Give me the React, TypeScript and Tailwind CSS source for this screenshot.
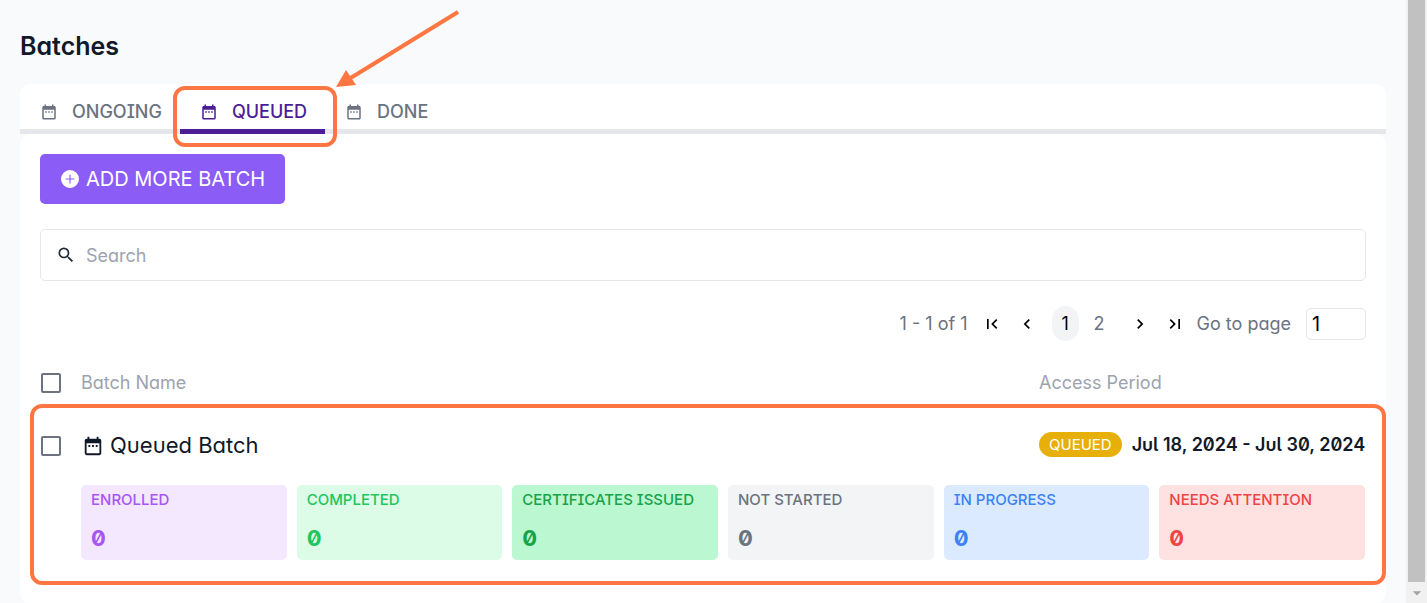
import {
  MdDateRange,
  MdSearch,
  MdFirstPage,
  MdLastPage,
  MdNavigateBefore,
  MdNavigateNext,
  MdArrowDropDown,
} from "react-icons/md";
import { BsPlusCircleFill } from "react-icons/bs";

const tabs = [
  { label: "ONGOING", active: false },
  { label: "QUEUED", active: true },
  { label: "DONE", active: false },
];

const stats = [
  { label: "ENROLLED", value: 0, style: "bg-[#f3e8ff] text-[#a855f7]" },
  { label: "COMPLETED", value: 0, style: "bg-[#dcfce7] text-[#22c55e]" },
  { label: "CERTIFICATES ISSUED", value: 0, style: "bg-[#bbf7d0] text-[#16a34a]" },
  { label: "NOT STARTED", value: 0, style: "bg-[#f3f4f6] text-[#6b7280]" },
  { label: "IN PROGRESS", value: 0, style: "bg-[#dbeafe] text-[#3b82f6]" },
  { label: "NEEDS ATTENTION", value: 0, style: "bg-[#fee2e2] text-[#ef4444]" },
];

function Checkbox({ label }: { label: string }) {
  return (
    <input
      type="checkbox"
      aria-label={label}
      className="block size-5 appearance-none rounded-[2px] border-2 border-[#6b7280] bg-white checked:bg-[#6b7280]"
    />
  );
}

function Tabs() {
  return (
    <div role="tablist" className="flex h-[50px] rounded-t-[10px] border-b-[5px] border-[#e5e7eb] bg-white">
      {tabs.map((tab) => (
        <div key={tab.label} className="relative">
          <button
            type="button"
            role="tab"
            aria-selected={tab.active}
            className={
              tab.active
                ? "flex h-[50px] items-center gap-[14px] border-b-[5px] border-[#4c1d95] pl-5 pr-[18px] pt-[10px] text-[18px] font-medium text-[#4c1d95]"
                : "flex h-[50px] items-center gap-[14px] border-b-[5px] border-transparent pl-5 pr-[18px] pt-[10px] text-[18px] font-medium text-[#6b7280]"
            }
          >
            <MdDateRange className="size-[18px]" />
            {tab.label}
          </button>
          {tab.active && (
            <div className="pointer-events-none absolute -left-[7px] -right-3 top-[2px] h-[61px] rounded-[12px] border-4 border-[#ff7643]" />
          )}
        </div>
      ))}
    </div>
  );
}

function Pagination() {
  return (
    <nav aria-label="Pagination" className="flex items-center justify-end text-[18px] text-[#6b7280]">
      <span className="mr-[14px]">1 - 1 of 1</span>
      <button type="button" aria-label="First page" className="mr-[15px] text-black">
        <MdFirstPage className="size-5 stroke-current" />
      </button>
      <button type="button" aria-label="Previous page" className="mr-[15px] text-black">
        <MdNavigateBefore className="size-5 stroke-current" />
      </button>
      <button type="button" className="h-[35px] w-[27px] rounded-full bg-[#f3f4f6] text-black">
        1
      </button>
      <button type="button" className="mx-[7px] h-[35px] w-[27px]">
        2
      </button>
      <button type="button" aria-label="Next page" className="ml-[10px] mr-[15px] text-black">
        <MdNavigateNext className="size-5 stroke-current" />
      </button>
      <button type="button" aria-label="Last page" className="mr-3 text-black">
        <MdLastPage className="size-5 stroke-current" />
      </button>
      <label htmlFor="page" className="mr-[15px]">
        Go to page
      </label>
      <input
        id="page"
        defaultValue="1"
        className="h-8 w-[60px] rounded-[5px] border border-[#e5e7eb] px-[5px] text-[20px] text-black outline-none"
      />
    </nav>
  );
}

function BatchTable() {
  return (
    <div className="relative mt-[19px]">
      <table className="w-full table-fixed border-collapse text-left">
        <colgroup>
          <col className="w-[41px]" />
          <col />
          <col className="w-[327px]" />
        </colgroup>
        <thead>
          <tr className="h-[44px] text-[18px] text-[#9ca3af]">
            <th className="p-0 pl-px pt-[2px]">
              <Checkbox label="Select all batches" />
            </th>
            <th className="p-0 font-normal">Batch Name</th>
            <th className="p-0 font-normal">Access Period</th>
          </tr>
        </thead>
        <tbody>
          <tr className="h-[81px] text-[#111827]">
            <td className="p-0 pl-px pt-[2px]">
              <Checkbox label="Select Queued Batch" />
            </td>
            <td className="p-0 pt-[2px]">
              <div className="flex items-center gap-[6px] text-[22px]">
                <MdDateRange className="ml-px size-[22px]" />
                Queued Batch
              </div>
            </td>
            <td className="p-0">
              <div className="flex items-center gap-[10px] whitespace-nowrap">
                <span className="rounded-full bg-[#e7b008] px-[10px] text-[15px] leading-[25px] text-white">
                  QUEUED
                </span>
                <span className="text-[18px] font-semibold">Jul 18, 2024 - Jul 30, 2024</span>
              </div>
            </td>
          </tr>
          <tr>
            <td className="p-0" />
            <td colSpan={2} className="p-0 pr-px">
              <dl className="grid grid-cols-6 gap-[10px]">
                {stats.map((stat) => (
                  <div key={stat.label} className={`h-[75px] rounded-[5px] px-[10px] pt-[5px] ${stat.style}`}>
                    <dt className="whitespace-nowrap text-[15px] font-medium leading-5">{stat.label}</dt>
                    <dd className="mt-[10px] text-[22px] font-bold leading-[36px]">{stat.value}</dd>
                  </div>
                ))}
              </dl>
            </td>
          </tr>
        </tbody>
      </table>
      <div className="pointer-events-none absolute -bottom-[25px] -left-[10px] -right-[20px] top-[44px] rounded-[12px] border-4 border-[#ff7643]" />
    </div>
  );
}

function Arrow() {
  return (
    <svg
      aria-hidden="true"
      viewBox="0 0 130 84"
      className="pointer-events-none absolute left-[333px] top-[8px] z-10 h-[84px] w-[130px]"
    >
      <path d="M125 4 16 71" stroke="#ff7643" strokeWidth="4" fill="none" />
      <path d="M3 79 13 62 23 77Z" fill="#ff7643" />
    </svg>
  );
}

function Scrollbar() {
  return (
    <div aria-hidden="true" className="sticky top-0 flex h-screen w-[21px] flex-col bg-[#f1f1f1] px-[2px]">
      <div className="flex-1 bg-[#c1c1c1]" />
      <div className="flex h-[21px] items-center justify-center">
        <MdArrowDropDown className="size-5 shrink-0 text-[#a3a3a3]" />
      </div>
    </div>
  );
}

export default function App() {
  return (
    <div className="relative flex min-h-screen bg-[#f9fafb] font-['Inter',sans-serif] [font-feature-settings:'zero','cv05','cv06','cv08','cv11']">
      <main className="min-w-0 flex-1 px-5 pt-[28px]">
        <h1 className="text-[25px] font-semibold leading-9 text-[#111827]">Batches</h1>
        <div className="mt-5">
          <Tabs />
          <section className="rounded-[10px] bg-white px-5 pb-[43px] pt-5">
            <button
              type="button"
              className="flex h-[50px] items-center gap-[7px] rounded-[5px] bg-[#8b5cf6] px-5 text-[20px] text-white"
            >
              <BsPlusCircleFill className="ml-px size-[18px]" />
              ADD MORE BATCH
            </button>
            <label className="mb-[25px] mt-[25px] flex h-[52px] items-center gap-[10px] rounded-[5px] border border-[#e5e7eb] px-[15px]">
              <MdSearch className="size-5 text-[#1f2937]" />
              <input
                type="search"
                aria-label="Search"
                placeholder="Search"
                className="min-w-0 flex-1 text-[18px] outline-none placeholder:text-[#9ca3af]"
              />
            </label>
            <Pagination />
            <BatchTable />
          </section>
        </div>
      </main>
      <Arrow />
      <Scrollbar />
    </div>
  );
}
